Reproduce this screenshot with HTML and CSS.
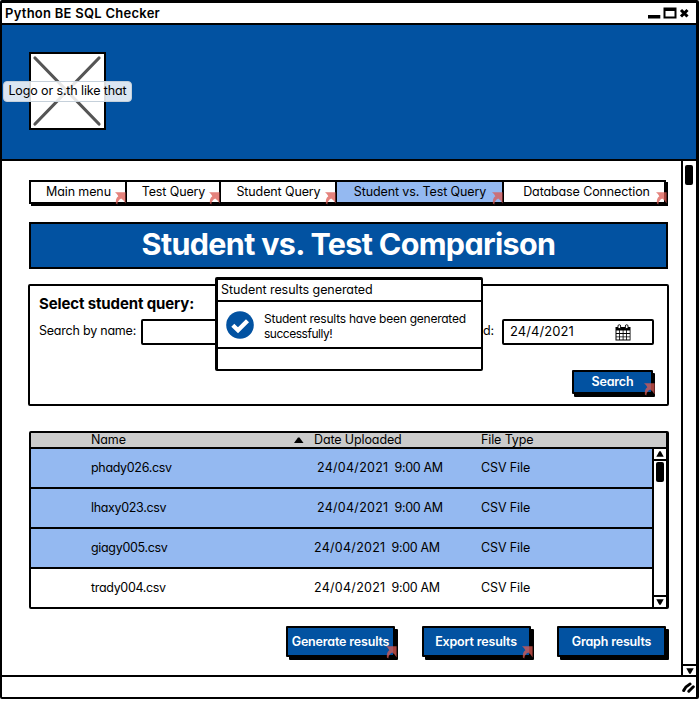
FILE: index.html
```html
<!DOCTYPE html>
<html lang="en">
<head>
<meta charset="utf-8">
<title>Python BE SQL Checker</title>
<link rel="stylesheet" href="styles.css">
</head>
<body>
<svg width="0" height="0" class="defs">
  <symbol id="link" viewBox="0 0 11 13"><path d="M0 .3H10.6V11.6L8.6 8.6 6.2 6.6Q2.6 8.5 2.3 12.4L.9 11.6Q.2 6.500 3.300 4.200Q2.200 1.600 0 .3Z"/></symbol>
</svg>
<div class="window">
  <header class="titlebar">
    <span class="app-name">Python BE SQL Checker</span>
    <svg class="controls" width="42" height="12" viewBox="0 0 42 12">
      <path d="M0 8H12.300V11.500H0Z"/>
      <path d="M15.500 .5H28.500V11.500H15.500ZM17.500 4V9.500H26.500V4Z" fill-rule="evenodd"/>
      <path d="M33 3 39.500 9.500M39.500 3 33 9.500" stroke="#000" stroke-width="3"/>
    </svg>
  </header>
  <section class="banner">
    <div class="logo">
      <svg width="72" height="74" viewBox="0 0 72 74"><path d="M4 4 68 70M68 4 4 70" stroke="#555" stroke-width="3.200" stroke-linecap="round" fill="none"/></svg>
      <span class="logo-label">Logo or s.th like that</span>
    </div>
  </section>
  <div class="body">
    <main class="content">
      <nav class="tabs">
        <a class="tab">Main menu<svg class="link"><use href="#link"/></svg></a>
        <a class="tab">Test Query<svg class="link"><use href="#link"/></svg></a>
        <a class="tab">Student Query<svg class="link"><use href="#link"/></svg></a>
        <a class="tab active">Student vs. Test Query<svg class="link"><use href="#link"/></svg></a>
        <a class="tab">Database Connection<svg class="link"><use href="#link"/></svg></a>
      </nav>
      <h1>Student vs. Test Comparison</h1>
      <section class="panel">
        <h2>Select student query:</h2>
        <div class="fields">
          <span class="label label-name">Search by name:</span>
          <div class="input name"></div>
          <span class="label label-date">Date Uploaded:</span>
          <div class="input date">
            <span>24/4/2021</span>
            <svg width="16" height="17" viewBox="0 0 16 17">
              <path d="M.5 3H15.500V16.500H.5Z"/>
              <path d="M1.500 6.500h2.700v2.500h-2.700zM5 6.500h2.700v2.500h-2.700zM8.500 6.500h2.700v2.500h-2.700zM12 6.500h2.700v2.500h-2.700zM1.500 9.900h2.700v2.500h-2.700zM5 9.900h2.700v2.500h-2.700zM8.500 9.900h2.700v2.500h-2.700zM12 9.900h2.700v2.500h-2.700zM1.500 13.300h2.700v2.300h-2.700zM5 13.300h2.700v2.300h-2.700zM8.500 13.300h2.700v2.300h-2.700zM12 13.300h2.700v2.300h-2.700z" fill="#fff"/>
              <path d="M3 4.500V2a1.300 1.300 0 0 1 2.600 0V4.500ZM10.400 4.500V2a1.300 1.300 0 0 1 2.600 0V4.500Z" fill="#fff" stroke="#000" stroke-width=".9"/>
            </svg>
          </div>
        </div>
        <button class="btn search">Search<svg class="link"><use href="#link"/></svg></button>
        <div class="dialog">
          <div class="dialog-title">Student results generated</div>
          <div class="dialog-body">
            <svg width="28" height="28" viewBox="0 0 28 28"><circle cx="14" cy="14" r="13.800" fill="#0252a1"/><path d="M6.800 14.300 12 19.300 21.500 9.800" fill="none" stroke="#fff" stroke-width="4.300"/></svg>
            <p>Student results have been generated<br><span class="tight">successfully!</span></p>
          </div>
          <div class="dialog-foot"></div>
        </div>
      </section>
      <section class="table">
        <div class="row head"><span>Name</span><svg width="10" height="6" viewBox="0 0 10 6"><path d="M0 6 4 .5H5.500L9.500 6Z"/></svg><span>Date Uploaded</span><span>File Type</span></div>
        <div class="table-body">
          <div class="rows">
            <div class="row sel"><span>phady026.csv</span><span class="when indent"><b>24/04/2021</b><i>9:00 AM</i></span><span>CSV File</span></div>
            <div class="row sel"><span>lhaxy023.csv</span><span class="when indent"><b>24/04/2021</b><i>9:00 AM</i></span><span>CSV File</span></div>
            <div class="row sel"><span>giagy005.csv</span><span class="when"><b>24/04/2021</b><i>9:00 AM</i></span><span>CSV File</span></div>
            <div class="row"><span>trady004.csv</span><span class="when"><b>24/04/2021</b><i>9:00 AM</i></span><span>CSV File</span></div>
          </div>
          <div class="scroll small">
            <div class="arrow up"><svg width="8" height="6" viewBox="0 0 8 6"><path d="M.3 5.700 3.300 .3H4.700L7.700 5.700Z"/></svg></div>
            <div class="track"><div class="thumb"></div></div>
            <div class="arrow down"><svg width="8" height="6" viewBox="0 0 8 6"><path d="M.3 .3H7.700L4.700 5.700H3.300Z"/></svg></div>
          </div>
        </div>
      </section>
      <div class="actions">
        <button class="btn">Generate results<svg class="link"><use href="#link"/></svg></button>
        <button class="btn">Export results<svg class="link"><use href="#link"/></svg></button>
        <button class="btn">Graph results</button>
      </div>
    </main>
    <div class="scroll">
      <div class="track"><div class="thumb"></div></div>
      <div class="arrow down"><svg width="8" height="6" viewBox="0 0 8 6"><path d="M.3 .3H7.700L4.700 5.700H3.300Z"/></svg></div>
    </div>
  </div>
  <footer class="status"><svg width="13" height="11" viewBox="0 0 13 11"><path d="M1.700 8.500Q4 4 8 2M6.800 9.200 11.300 4.800" stroke="#000" stroke-width="3" stroke-linecap="round" fill="none"/></svg></footer>
</div>
</body>
</html>
```
FILE: styles.css
```css
* { box-sizing: border-box; }
body {
  margin: 0;
  background: #fff;
  color: #000;
  font: 12.5px/16px Inter, "Open Sans", sans-serif;
  font-feature-settings: "cv11";
  letter-spacing: -0.12px;
  white-space: nowrap;
  overflow: hidden;
}
h1, h2, p { margin: 0; }
svg { display: block; flex: none; }
.defs { position: absolute; }

.window {
  width: 699px;
  height: 699px;
  display: flex;
  flex-direction: column;
  border: solid #000;
  border-width: 3px 3px 2px 2px;
  border-radius: 2px;
}
.titlebar {
  height: 22px;
  flex: none;
  display: flex;
  align-items: center;
  justify-content: space-between;
  padding: 0 6px 0 3px;
  border-bottom: 2px solid #000;
}
.app-name { font-size: 13px; font-weight: 600; letter-spacing: 0.26px; }
.banner {
  height: 136px;
  flex: none;
  padding: 27px 27px 0;
  background: #0252a1;
  border-bottom: 2px solid #000;
}
.logo {
  position: relative;
  width: 77px;
  height: 78px;
  background: #fff;
  border: 2px solid #000;
}
.logo-label {
  position: absolute;
  left: -28px;
  top: 27px;
  width: 129px;
  height: 21px;
  line-height: 18px;
  text-align: center;
  background: rgba(255, 255, 255, 0.86);
  border: 1px solid #c5d0da;
  border-radius: 4px;
}

.body { display: flex; height: 514px; flex: none; }
.content { width: 679px; padding: 19px 0 0 27px; }

.tabs {
  display: grid;
  grid-template-columns: 96px 94px 116px 167px 1fr;
  width: 637px;
  height: 24px;
  border: 2px solid #000;
  box-shadow: 2px 2px #000;
}
.tab {
  position: relative;
  padding-left: 1px;
  line-height: 19px;
  text-align: center;
  border-right: 2px solid #000;
}
.tab:last-child { padding-left: 5px; border-right: 0; }
.active { background: #94b9f1; }
.link {
  position: absolute;
  right: -1px;
  bottom: -3px;
  width: 11px;
  height: 13px;
  fill: #dd5a52;
  opacity: 0.75;
}
.tab:last-child .link { right: -3px; }

h1 {
  width: 639px;
  height: 47px;
  margin-top: 18px;
  line-height: 40px;
  font-size: 30.5px;
  font-weight: 700;
  letter-spacing: -0.66px;
  text-align: center;
  color: #fff;
  background: #0252a1;
  border: 2px solid #000;
}

.panel {
  position: relative;
  width: 641px;
  height: 122px;
  margin: 15px 0 0 -1px;
  padding: 8px 13px 0 9px;
  border: 2px solid #000;
  border-radius: 2px;
}
h2 { font-size: 15px; line-height: 20px; font-weight: 700; letter-spacing: -0.13px; }
.fields { display: flex; align-items: center; margin-top: 5px; }
.label { padding-bottom: 3px; }
.label-name { width: 102px; letter-spacing: -0.22px; }
.label-date { flex: 1; padding-right: 8px; text-align: right; }
.input { height: 26px; border: 2px solid #000; border-radius: 2px; }
.name { width: 200px; }
.date {
  width: 152px;
  display: flex;
  align-items: center;
  justify-content: space-between;
  padding: 0 21px 0 6px;
  font-size: 13px;
  letter-spacing: 0.08px;
}
.date span { padding-bottom: 2px; }
.btn {
  position: relative;
  width: 109px;
  height: 31px;
  padding: 0;
  font: 600 12.5px/26px Inter, sans-serif;
  font-feature-settings: "cv11";
  letter-spacing: -0.17px;
  color: #fff;
  background: #0252a1;
  border: 2px solid #000;
  border-radius: 1px;
  box-shadow: 3px 3px #000;
}
.btn .link { right: -4px; bottom: -4px; }
.search { display: block; width: 81px; height: 24px; line-height: 20px; margin: 25px 0 0 533px; box-shadow: 2px 3px #000; }

.dialog {
  position: absolute;
  left: 185px;
  top: -9px;
  width: 268px;
  height: 94px;
  background: #fff;
  border: solid #000;
  border-width: 3px 2px 2px 3px;
  border-radius: 2px;
}
.dialog-title { height: 22px; padding-left: 3px; line-height: 19px; letter-spacing: -0.06px; border-bottom: 2px solid #000; }
.dialog-body { display: flex; height: 47px; padding: 9px 0 0 8px; gap: 10px; border-bottom: 2px solid #000; }
.dialog-body p { font-size: 12px; line-height: 15px; letter-spacing: -0.24px; }
.tight { letter-spacing: -0.48px; }

.table {
  width: 640px;
  height: 178px;
  margin-top: 25px;
  border: 2px solid #000;
  border-right-width: 3px;
  border-radius: 2px;
}
.row {
  display: grid;
  grid-template-columns: 223px 167px 1fr;
  align-items: center;
  height: 40px;
  padding-left: 60px;
  border-bottom: 2px solid #000;
}
.row:last-child { border-bottom: 0; height: 38px; }
.row.head { grid-template-columns: 203px 20px 167px 1fr; height: 16px; background: #cbcbcb; }
.row span { line-height: 16px; }
.row.head span { line-height: 14px; }
.row span:first-child { letter-spacing: -0.33px; }
.row.head span:first-child { letter-spacing: -0.1px; }
.sel { background: #94b9f1; }
.when { display: flex; gap: 6px; }
.indent { padding-left: 3px; }
.when b, .when i { font-weight: 400; font-style: normal; }
.row .when b { letter-spacing: 0.28px; }
.row .when i { letter-spacing: -0.34px; }
.table-body { display: flex; height: 158px; }
.rows { flex: 1; }

.scroll { display: flex; flex-direction: column; width: 15px; background: #fff; border-left: 2px solid #000; }
.track { flex: 1; padding: 4px 0 0 2px; }
.thumb { width: 8px; height: 20px; background: #000; border-radius: 2px; }
.arrow { display: flex; align-items: center; justify-content: center; height: 10px; }
.up { height: 12px; border-bottom: 2px solid #000; }
.down { height: 11px; border-top: 2px solid #000; }
.small { width: 14px; }
.small .track { padding: 1px 0 0 2px; }
.small .down { height: 12px; }

.actions { display: flex; gap: 26.5px; margin: 17px 0 0 257px; }
.status { display: flex; align-items: center; justify-content: flex-end; flex: 1; padding-right: 1px; border-top: 2px solid #000; }
```
